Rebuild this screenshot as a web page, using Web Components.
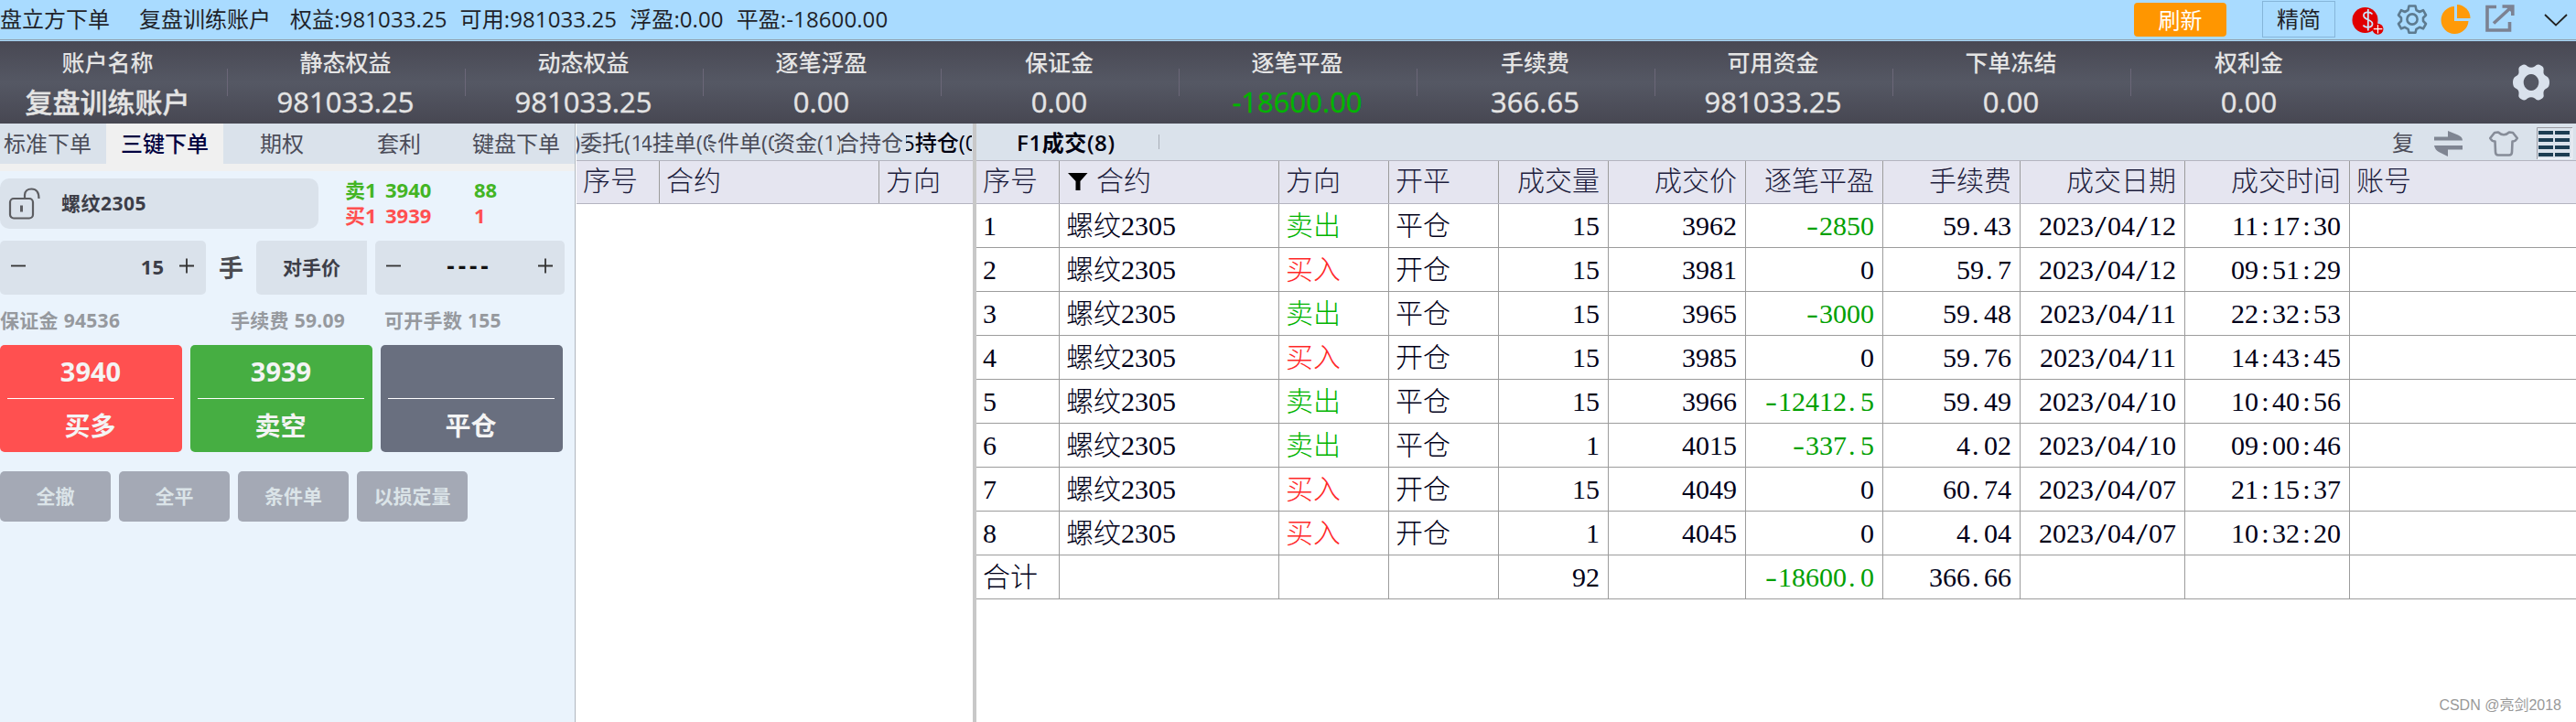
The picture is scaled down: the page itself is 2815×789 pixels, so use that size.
<!DOCTYPE html>
<html lang="zh-CN">
<head>
<meta charset="utf-8">
<title>盘立方下单</title>
<style>
  body {
    margin: 0;
    width: 2815px;
    height: 789px;
    overflow: hidden;
    background: #fff;
    font-family: "Open Sans", "Noto Sans CJK SC", sans-serif;
  }
</style>
</head>
<body>
<trade-app></trade-app>

<script>
const ICONS = {
  money: `<svg width="36" height="34" viewBox="0 0 36 34">
    <circle cx="14.5" cy="17" r="14" fill="#e00000"/>
    <path d="M22.5 10.5C20 7.5 13 7.5 13 12C13 17 22.5 16 22.5 21C22.5 26 14.500 25.500 12.500 22.500M17.800 5V28.500" fill="none" stroke="#c9e6fb" stroke-width="1.8"/>
    <circle cx="28.500" cy="26.700" r="6" fill="#e00000"/>
    <path d="M28.500 22v9.500M23.800 26.700h9.500" stroke="#fff" stroke-width="1.2"/></svg>`,
  gear: `<svg width="32" height="32" viewBox="0 0 32 32" fill="none" stroke="#5d7b90" stroke-width="2.6" stroke-linejoin="round">
    <path d="M12.500 1.500h7l1 4.500l3.500 2l4-1.800l3 5.300l-3 3v3.500l3 3l-3 5.300l-4-1.500l-3.500 2l-1 4h-7l-1-4l-3.500-2l-4 1.500l-3-5.300l3-3v-3.500l-3-3l3-5.300l4 1.800l3.500-2z"/>
    <circle cx="16" cy="16" r="5.600"/></svg>`,
  pie: `<svg width="32" height="32" viewBox="0 0 32 32" fill="#ff9a08">
    <path d="M14 2A15 15 0 1 0 29.500 18H14z"/>
    <path d="M17 0A15 15 0 0 1 31.500 15H17z"/></svg>`,
  share: `<svg width="32" height="31" viewBox="0 0 32 31" fill="none" stroke="#7c8292" stroke-width="3.600">
    <path d="M12 2.500H2V28H26.500V19"/>
    <path d="M9 20.500L27 4"/><path d="M18.500 2H29.800V12"/><path d="M22 2h8v8z" fill="#7c8292" stroke="none"/></svg>`,
  chevron: `<svg width="26" height="14" viewBox="0 0 26 14" fill="none" stroke="#222" stroke-width="1.800"><path d="M1 1L13 12.500L25 1"/></svg>`,
  cog: `<svg width="40" height="40" viewBox="0 0 40 40">
    <path fill="#d9e1ec" fill-rule="evenodd" d="M9.500 1.500Q13 -1 16 2.500Q20 5 24 2.500Q27 -1 30.500 1.500Q34.500 3 33.500 7.500Q33 12 37 13.500Q40 15 40 20Q40 25 37 26.500Q33 28 33.500 32.500Q34.500 37 30.500 38.500Q27 41 24 37.500Q20 35 16 37.500Q13 41 9.500 38.500Q5.500 37 6.500 32.500Q7 28 3 26.500Q0 25 0 20Q0 15 3 13.500Q7 12 6.500 7.500Q5.500 3 9.500 1.500ZM20 11a8.300 9 0 1 0 .01 0z"/></svg>`,
  swap: `<svg width="32" height="28" viewBox="0 0 32 28" fill="#7f8592">
    <path d="M0 6.500h15V0l11 4.500q5 2 5 6H0zM31 16H0q1 5 5 7l10 5v-7.500h16z"/></svg>`,
  shirt: `<svg width="32" height="28" viewBox="0 0 32 28" fill="none" stroke="#868c98" stroke-width="2.600" stroke-linejoin="round">
    <path d="M10 1.500Q16 7 22 1.500L26 2L30.800 8Q29 11.500 25.500 11.500L25 23Q25 26.500 22 26.500H10Q7 26.500 7 23L6.500 11.500Q3 11.500 1.200 8L6 2z"/></svg>`,
  grid: `<svg width="40" height="35" viewBox="0 0 40 35">
    <path d="M0.500 35V0.500H39" fill="none" stroke="#9a9aa2"/><path d="M38.800 1V34.500H1" fill="none" stroke="#f4f6fa"/>
    <path d="M2 4h16v4h-16zm18 0h16v4h-16zM2 12h16v4h-16zm18 0h16v4h-16zM2 20h16v4h-16zm18 0h16v4h-16zM2 28h16v4h-16zm18 0h16v4h-16z" fill="#1c3d52"/></svg>`,
  lock: `<svg width="35" height="35" viewBox="0 0 35 35" fill="none" stroke="#5c5d61" stroke-width="2.200">
    <rect x="1" y="12" width="25" height="21.500" rx="4"/>
    <path d="M17 12V8Q17.500 1.500 24.500 1.500Q32.500 1.500 32.500 12"/><path d="M13.500 19.500v7" stroke-width="3"/></svg>`,
  funnel: `<svg width="22" height="20" viewBox="0 0 22 20"><path d="M0 0H21.500L13.500 9V19H8.500V9z"/></svg>`,
};

class AppIcon extends HTMLElement {
  constructor() {
    super();
    this.attachShadow({ mode: 'open' });
  }

  connectedCallback() {
    this.shadowRoot.innerHTML = `
      <style>
        :host { display: block; flex: none; }
        svg { display: block; overflow: visible; }
      </style>
      ${ICONS[this.getAttribute('name')]}
    `;
  }
}

class TitleBar extends HTMLElement {
  constructor() {
    super();
    this.attachShadow({ mode: 'open' });
  }

  connectedCallback() {
    this.shadowRoot.innerHTML = `
      <style>
        :host {
          display: flex;
          box-sizing: border-box;
          height: 45px;
          background: #a9dbff;
          border-bottom: 1px solid #a9dbff;
          box-shadow: inset 0 -1px #8e9fac;
          font-size: 24px;
          line-height: 42px;
          color: #1f2329;
        }
        .account { margin-left: 32px; }
        .stats { display: flex; gap: 14px; margin-left: 21px; flex: 1; white-space: pre; letter-spacing: 0.1px; }
        .refresh, .mini { box-sizing: border-box; text-align: center; }
        .refresh {
          width: 101px;
          height: 37px;
          margin: 3px 39px 0 0;
          border-radius: 4px;
          background: #ff9600;
          color: #fff;
          line-height: 37px;
        }
        .mini {
          width: 80px;
          height: 40px;
          margin: 1px 18px 0 0;
          border: 1px solid #86b5d9;
          line-height: 38px;
        }
        .icons { display: flex; gap: 16px; padding: 5px 9px 0 0; }
        .icons app-icon:nth-child(1) { margin-right: -2px; }
        .icons app-icon:nth-child(5) { margin: 10px 0 0 16px; }
      </style>
      <span>盘立方下单</span>
      <span class="account">复盘训练账户</span>
      <div class="stats">
        <span>权益:981033.25</span>
        <span>可用:981033.25</span>
        <span>浮盈:0.00</span>
        <span>平盈:-18600.00</span>
      </div>
      <div class="refresh">刷新</div>
      <div class="mini">精简</div>
      <div class="icons">
        <app-icon name="money"></app-icon>
        <app-icon name="gear"></app-icon>
        <app-icon name="pie"></app-icon>
        <app-icon name="share"></app-icon>
        <app-icon name="chevron"></app-icon>
      </div>
    `;
  }
}

class AccountItem extends HTMLElement {
  constructor() {
    super();
    this.attachShadow({ mode: 'open' });
  }

  connectedCallback() {
    this.shadowRoot.innerHTML = `
      <style>
        :host {
          display: block;
          width: 260px;
          height: 90px;
          text-align: center;
          color: #e4e4e4;
          background: linear-gradient(#6b6778, #6b6778) right 0 top 30px / 1px 30px no-repeat;
        }
        :host(:last-of-type) { background: none; }
        .label, .value { margin-left: -3px; }
        .label { font-size: 25px; font-weight: 500; line-height: 46px; }
        .value {
          font-size: var(--value-size, 31px);
          line-height: 41px;
          color: var(--value-color, #e4e4e4);
          font-weight: 500;
          -webkit-text-stroke: 0.4px;
        }
      </style>
      <div class="label">${this.getAttribute('label')}</div>
      <div class="value"><slot></slot></div>
    `;
  }
}

class AccountPanel extends HTMLElement {
  constructor() {
    super();
    this.attachShadow({ mode: 'open' });
  }

  connectedCallback() {
    this.shadowRoot.innerHTML = `
      <style>
        :host {
          display: flex;
          height: 90px;
          background: linear-gradient(#484853, #555864 50%, #474752);
        }
        .items { display: flex; flex: 1; margin-left: -11px; }
        .name { --value-size: 30px; }
        .loss { --value-color: #00b400; }
        app-icon { margin: 25px 29px 0 0; }
      </style>
      <div class="items">
        <account-item label="账户名称" class="name">复盘训练账户</account-item>
        <account-item label="静态权益">981033.25</account-item>
        <account-item label="动态权益">981033.25</account-item>
        <account-item label="逐笔浮盈">0.00</account-item>
        <account-item label="保证金">0.00</account-item>
        <account-item label="逐笔平盈" class="loss">-18600.00</account-item>
        <account-item label="手续费">366.65</account-item>
        <account-item label="可用资金">981033.25</account-item>
        <account-item label="下单冻结">0.00</account-item>
        <account-item label="权利金">0.00</account-item>
      </div>
      <app-icon name="cog"></app-icon>
    `;
  }
}

class OrderButton extends HTMLElement {
  constructor() {
    super();
    this.attachShadow({ mode: 'open' });
  }

  connectedCallback() {
    this.shadowRoot.innerHTML = `
      <style>
        :host {
          display: flex;
          flex-direction: column;
          width: 199px;
          height: 117px;
          border-radius: 5px;
          background: var(--button-color);
          color: #f4f4f4;
          font-size: 28px;
          font-weight: 700;
          text-align: center;
        }
        .price {
          box-sizing: border-box;
          height: 59px;
          margin: 0 9px 0 8px;
          border-bottom: 1px solid #fff;
          font-size: 29px;
          line-height: 58px;
        }
        .action { line-height: 58px; margin-right: 2px; }
      </style>
      <div class="price">${this.getAttribute('price') || ''}</div>
      <div class="action"><slot></slot></div>
    `;
  }
}

class OrderPanel extends HTMLElement {
  constructor() {
    super();
    this.attachShadow({ mode: 'open' });
  }

  connectedCallback() {
    this.shadowRoot.innerHTML = `
      <style>
        :host {
          display: flex;
          flex-direction: column;
          width: 628px;
          background: #eaf3fc;
          border-right: 1px solid #b0b6be;
          font-size: 21px;
          font-weight: 700;
          color: #3d3e48;
          white-space: nowrap;
        }
        .tabs {
          display: flex;
          height: 44px;
          background: #dae2eb;
          border-bottom: 8px solid #f0f0f0;
          overflow: hidden;
          font-size: 24px;
          font-weight: 400;
          line-height: 44px;
          color: #4b4c58;
        }
        .tab { width: 128px; flex: none; text-align: center; }
        .tab:first-child { margin-left: -12px; }
        .tab.active { background: #f0f0f0; color: #000040; font-weight: 500; }
        .row { display: flex; }
        .box {
          display: flex;
          box-sizing: border-box;
          height: 59px;
          background: #dae2eb;
          border-radius: 5px;
          line-height: 57px;
        }
        .contract { width: 348px; height: 55px; padding: 10px 0 0 10px; border-radius: 10px; gap: 22px; line-height: 34px; letter-spacing: 0.5px; }
        .quote {
          display: grid;
          grid-template-columns: 44px 97px auto;
          margin: -1px 0 0 29px;
          align-content: start;
          font-size: 22px;
          line-height: 27.5px;
        }
        .ask { color: #43b524; }
        .bid { color: #ff5050; }
        svg { display: block; margin-top: 19px; flex: none; }
        .qty { width: 225px; padding: 0 13px 0 12px; }
        .qty .num { flex: 1; text-align: right; margin-right: 17px; font-size: 22px; }
        .unit { width: 55px; text-align: center; font-size: 27px; line-height: 59px; color: #4c4d52; }
        .match { width: 121px; border-radius: 5px 0 0 5px; justify-content: center; line-height: 59px; }
        .price { width: 207px; margin-left: 9px; padding: 0 13px 0 12px; }
        .price .num { flex: 1; text-align: center; color: #111; letter-spacing: 4px; font-size: 26px; line-height: 54px; }
        .info { margin-top: 13px; color: #96999e; line-height: 30px; letter-spacing: 0.3px; }
        .info span:nth-child(1) { width: 252px; }
        .info span:nth-child(2) { width: 168px; }
        .orders { gap: 9px; margin-top: 12px; }
        .red { --button-color: #ff5050; }
        .green { --button-color: #46ae42; }
        .gray { --button-color: #696f7f; }
        .tools { gap: 9px; margin-top: 21px; }
        .tool {
          width: 121px;
          height: 55px;
          border-radius: 5px;
          background: #a4a9b5;
          color: #dbe4e8;
          line-height: 54px;
          text-align: center;
        }
      </style>
      <div class="tabs">
        <div class="tab">标准下单</div>
        <div class="tab active">三键下单</div>
        <div class="tab">期权</div>
        <div class="tab">套利</div>
        <div class="tab">键盘下单</div>
      </div>
      <div class="row" style="margin-top: 8px">
        <div class="box contract"><app-icon name="lock"></app-icon><span>螺纹2305</span></div>
        <div class="quote">
          <span class="ask">卖1</span><span class="ask">3940</span><span class="ask">88</span>
          <span class="bid">买1</span><span class="bid">3939</span><span class="bid">1</span>
        </div>
      </div>
      <div class="row" style="margin-top: 13px">
        <div class="box qty">
          ${this.step('M0 8.500H16')}<span class="num">15</span>${this.step('M0 8.500H16M8 0.500V16.500')}
        </div>
        <span class="unit">手</span>
        <div class="box match">对手价</div>
        <div class="box price">
          ${this.step('M0 8.500H16')}<span class="num">----</span>${this.step('M0 8.500H16M8 0.500V16.500')}
        </div>
      </div>
      <div class="row info"><span>保证金 94536</span><span>手续费 59.09</span><span>可开手数 155</span></div>
      <div class="row orders">
        <order-button class="red" price="3940">买多</order-button>
        <order-button class="green" price="3939">卖空</order-button>
        <order-button class="gray">平仓</order-button>
      </div>
      <div class="row tools">
        <div class="tool">全撤</div>
        <div class="tool">全平</div>
        <div class="tool">条件单</div>
        <div class="tool">以损定量</div>
      </div>
    `;
  }

  step(path) {
    return `<svg width="16" height="17" viewBox="0 0 16 17"><path d="${path}" stroke="#333" stroke-width="1.800"/></svg>`;
  }
}

class GridTable extends HTMLElement {
  constructor() {
    super();
    this.attachShadow({ mode: 'open' });
  }

  connectedCallback() {
    this.render();
  }

  getParsedAttribute(attrName) {
    try {
      return JSON.parse(this.getAttribute(attrName)) || [];
    } catch (e) {
      console.error(`Failed to parse ${attrName}:`, e);
      return [];
    }
  }

  format(text) {
    return String(text)
      .replace(/[\/:.-]/g, (c) => {
        const kind = { '/': 'slash', ':': 'colon', '.': 'dot', '-': 'minus' }[c];
        return `<i class="${kind}">${c}</i>`;
      });
  }

  cellClass(text, align) {
    if (text === '卖出') return 'sell';
    if (text === '买入') return 'buy';
    return align === 'right' && String(text).startsWith('-') ? 'right loss' : align;
  }

  render() {
    const columns = this.getParsedAttribute('data-columns');
    const rows = this.getParsedAttribute('data-rows');

    this.shadowRoot.innerHTML = `
      <style>
        :host {
          display: block;
          font-family: "Liberation Serif", "Noto Sans CJK SC", serif;
          font-size: 30px;
          font-weight: 300;
          color: #000018;
        }
        .row {
          display: grid;
          grid-template-columns: ${this.getAttribute('widths')};
          height: 47px;
          border-bottom: 1px solid #9c9c9c;
          line-height: 47px;
        }
        .head { height: 46px; background: #e5e5f0; border-color: #b4b4c0; color: #1c1c3c; line-height: 44px; }
        .cell { display: flex; overflow: hidden; padding: 0 10px 0 7px; border-right: 1px solid #9c9c9c; white-space: nowrap; }
        .cell:last-child { border-right: 0; }
        .right { justify-content: flex-end; padding-right: 9px; }
        .sell { color: #00b400; }
        .loss { color: #00a000; }
        .buy { color: #ff2828; }
        app-icon { margin: 13px 9px 0 2px; }
        i { display: inline-block; width: 0.5em; font-style: normal; text-align: center; }
        i.dot { text-align: left; text-indent: 2px; }
        i.minus { transform: scaleX(1.300); }
        i.slash { transform: scale(1.500, 1.150); }
      </style>
      <div class="row head">
        ${columns
          .map(
            (column) => `<div class="cell ${column.align || ''}">${
              column.filter ? '<app-icon name="funnel"></app-icon>' : ''
            }<span>${column.label}</span></div>`
          )
          .join('')}
      </div>
      ${rows
        .map(
          (row) => `<div class="row">${columns
            .map((column, i) => {
              const text = row[i] === undefined ? '' : row[i];
              return `<div class="cell ${this.cellClass(text, column.align || '')}"><span>${this.format(text)}</span></div>`;
            })
            .join('')}</div>`
        )
        .join('')}
    `;
  }
}

class PositionPanel extends HTMLElement {
  constructor() {
    super();
    this.attachShadow({ mode: 'open' });
  }

  connectedCallback() {
    this.shadowRoot.innerHTML = `
      <style>
        :host { display: block; width: 433px; margin-left: 1px; background: #fff; overflow: hidden; }
        .tabs {
          display: flex;
          height: 40px;
          background: #dae2eb;
          border-bottom: 1px solid #b4b4c0;
          font-size: 24px;
          line-height: 42px;
          color: #4b4c58;
        }
        .tab { width: 72px; flex: none; overflow: hidden; white-space: nowrap; text-indent: var(--shift); }
        .tab.active { color: #000010; font-weight: 500; }
      </style>
      <div class="tabs">
        <div class="tab" style="--shift: -3px">)委托(14</div>
        <div class="tab" style="--shift: -3px">4挂单(0</div>
        <div class="tab" style="--shift: -14px">条件单(0</div>
        <div class="tab" style="--shift: -1px">资金(1)</div>
        <div class="tab" style="--shift: -3px">合持仓</div>
        <div class="tab active" style="--shift: -4px">5持仓(0</div>
      </div>
      <grid-table
        widths="91px 240px 1fr"
        data-columns='[{"label": "序号"}, {"label": "合约"}, {"label": "方向"}]'
      ></grid-table>
    `;
  }
}

class DealPanel extends HTMLElement {
  constructor() {
    super();
    this.attachShadow({ mode: 'open' });
  }

  connectedCallback() {
    this.shadowRoot.innerHTML = `
      <style>
        :host { display: flex; flex-direction: column; flex: 1; border-left: 4px solid #c8c8c8; background: #fff; }
        .bar {
          display: flex;
          height: 40px;
          background: #dae2eb;
          border-bottom: 1px solid #b4b4c0;
          font-size: 24px;
          line-height: 41px;
          color: #4b4c58;
        }
        .tab { box-sizing: border-box; width: 200px; padding-left: 44px; color: #000010; font-weight: 600; letter-spacing: 0.6px;
          background: linear-gradient(#a8adb6, #a8adb6) right 0 top 12px / 1px 16px no-repeat; }
        .tools { display: flex; margin-left: auto; padding-right: 3px; }
        .tools app-icon { margin-top: 8px; }
        .swap { margin-left: 22px; }
        .shirt { margin-left: 28px; }
        .tools .grid { margin: 4px 0 0 20px; }
        .mark {
          margin: auto 16px 8px auto;
          font: 16px/20px "Liberation Sans", "Noto Sans CJK SC", sans-serif;
          color: #999;
        }
      </style>
      <div class="bar">
        <div class="tab">F1成交(8)</div>
        <div class="tools">
          <span>复</span>
          <app-icon class="swap" name="swap"></app-icon>
          <app-icon class="shirt" name="shirt"></app-icon>
          <app-icon class="grid" name="grid"></app-icon>
        </div>
      </div>
      <grid-table
        widths="91px 240px 120px 120px 120px 150px 150px 150px 180px 180px 1fr"
        data-columns='[
          {"label": "序号"}, {"label": "合约", "filter": true}, {"label": "方向"}, {"label": "开平"},
          {"label": "成交量", "align": "right"}, {"label": "成交价", "align": "right"},
          {"label": "逐笔平盈", "align": "right"}, {"label": "手续费", "align": "right"},
          {"label": "成交日期", "align": "right"}, {"label": "成交时间", "align": "right"}, {"label": "账号"}
        ]'
        data-rows='[
          ["1", "螺纹2305", "卖出", "平仓", "15", "3962", "-2850", "59.43", "2023/04/12", "11:17:30"],
          ["2", "螺纹2305", "买入", "开仓", "15", "3981", "0", "59.7", "2023/04/12", "09:51:29"],
          ["3", "螺纹2305", "卖出", "平仓", "15", "3965", "-3000", "59.48", "2023/04/11", "22:32:53"],
          ["4", "螺纹2305", "买入", "开仓", "15", "3985", "0", "59.76", "2023/04/11", "14:43:45"],
          ["5", "螺纹2305", "卖出", "平仓", "15", "3966", "-12412.5", "59.49", "2023/04/10", "10:40:56"],
          ["6", "螺纹2305", "卖出", "平仓", "1", "4015", "-337.5", "4.02", "2023/04/10", "09:00:46"],
          ["7", "螺纹2305", "买入", "开仓", "15", "4049", "0", "60.74", "2023/04/07", "21:15:37"],
          ["8", "螺纹2305", "买入", "开仓", "1", "4045", "0", "4.04", "2023/04/07", "10:32:20"],
          ["合计", "", "", "", "92", "", "-18600.0", "366.66", "", ""]
        ]'
      ></grid-table>
      <div class="mark">CSDN @亮剑2018</div>
    `;
  }
}

class TradeApp extends HTMLElement {
  constructor() {
    super();
    this.attachShadow({ mode: 'open' });
  }

  connectedCallback() {
    this.shadowRoot.innerHTML = `
      <style>
        :host { display: flex; flex-direction: column; height: 789px; }
        .main { display: flex; flex: 1; min-height: 0; }
      </style>
      <title-bar></title-bar>
      <account-panel></account-panel>
      <div class="main">
        <order-panel></order-panel>
        <position-panel></position-panel>
        <deal-panel></deal-panel>
      </div>
    `;
  }
}

customElements.define('app-icon', AppIcon);
customElements.define('title-bar', TitleBar);
customElements.define('account-item', AccountItem);
customElements.define('account-panel', AccountPanel);
customElements.define('order-button', OrderButton);
customElements.define('order-panel', OrderPanel);
customElements.define('grid-table', GridTable);
customElements.define('position-panel', PositionPanel);
customElements.define('deal-panel', DealPanel);
customElements.define('trade-app', TradeApp);
</script>
</body>
</html>
